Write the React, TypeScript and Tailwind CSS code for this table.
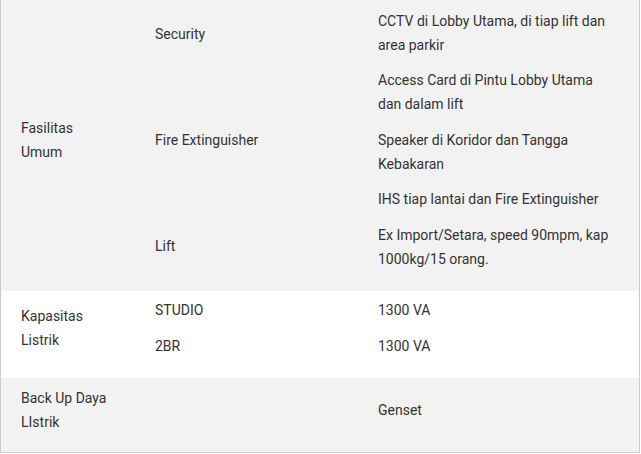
const row = "grid grid-cols-[134px_223px_1fr]";
const line = "leading-6 mb-[11.4px]";

function Lines({ items }: { items: string[] }) {
  return (
    <div className="px-5 self-center">
      {items.map((t, i) => (
        <p key={i} className={`${line} max-w-[236px]`}>
          {t}
        </p>
      ))}
    </div>
  );
}

export default function App() {
  return (
    <div
      className="w-[640px] border-x border-b border-[#cccccc] text-[14px] text-[#333333]"
      style={{ fontFamily: "Roboto, 'Liberation Sans', sans-serif" }}
    >
      {/* Fasilitas Umum */}
      <div className={`${row} bg-[#f2f2f2] py-[9px]`}>
        <div className="px-5 self-center">
          <p className={line}>Fasilitas Umum</p>
        </div>
        <div className="px-5 self-center flex flex-col gap-[82px] mb-[11.4px]">
          <p className="leading-6">Security</p>
          <p className="leading-6">Fire Extinguisher</p>
          <p className="leading-6">Lift</p>
        </div>
        <Lines
          items={[
            "CCTV di Lobby Utama, di tiap lift dan area parkir",
            "Access Card di Pintu Lobby Utama dan dalam lift",
            "Speaker di Koridor dan Tangga Kebakaran",
            "IHS tiap lantai dan Fire Extinguisher",
            "Ex Import/Setara, speed 90mpm, kap 1000kg/15 orang.",
          ]}
        />
      </div>

      {/* Kapasitas Listrik */}
      <div className={`${row} bg-white pt-[7.5px] pb-[9px]`}>
        <div className="px-5 self-center">
          <p className={line}>Kapasitas Listrik</p>
        </div>
        <Lines items={["STUDIO", "2BR"]} />
        <Lines items={["1300 VA", "1300 VA"]} />
      </div>

      {/* Back Up Daya */}
      <div className={`${row} bg-[#f2f2f2] py-[7.3px]`}>
        <div className="px-5 self-center">
          <p className={line}>Back Up Daya LIstrik</p>
        </div>
        <div />
        <Lines items={["Genset"]} />
      </div>
    </div>
  );
}
